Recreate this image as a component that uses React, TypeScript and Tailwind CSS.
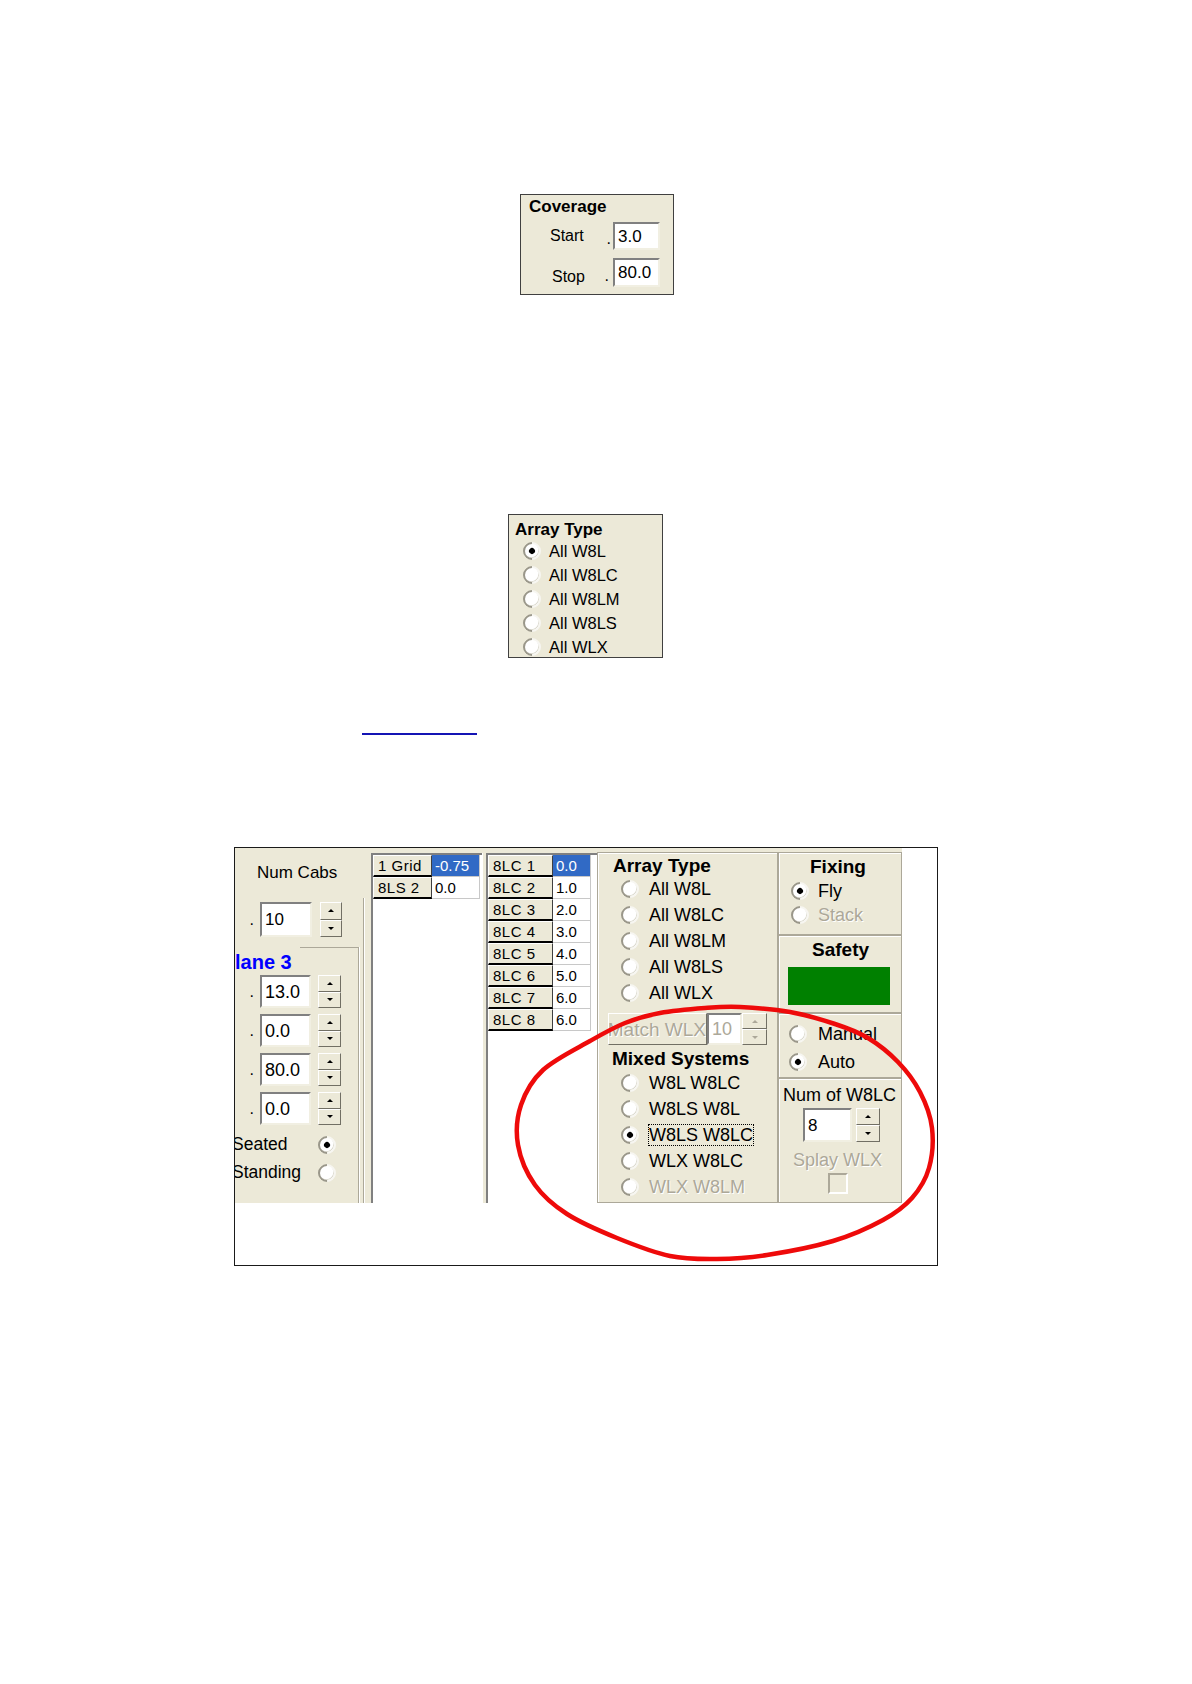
import React from "react";

type Pt = [number, number];

// hand-drawn red loop over the screenshot, page coordinates
const LOOP: Pt[] = [
  [740, 1007], [790, 1012], [835, 1024], [868, 1038], [898, 1062], [920, 1092],
  [932, 1128], [929, 1168], [912, 1198], [883, 1220], [833, 1241], [767, 1255],
  [717, 1259], [670, 1256], [617, 1238], [567, 1214], [535, 1185], [518, 1145],
  [521, 1105], [543, 1070], [590, 1041], [625, 1023], [660, 1013], [705, 1008],
];

function smoothClosed(pts: Pt[]) {
  const n = pts.length;
  let d = `M${pts[0][0]},${pts[0][1]}`;
  for (let i = 0; i < n; i++) {
    const p0 = pts[(i - 1 + n) % n];
    const p1 = pts[i];
    const p2 = pts[(i + 1) % n];
    const p3 = pts[(i + 2) % n];
    const c1x = p1[0] + (p2[0] - p0[0]) / 6;
    const c1y = p1[1] + (p2[1] - p0[1]) / 6;
    const c2x = p2[0] - (p3[0] - p1[0]) / 6;
    const c2y = p2[1] - (p3[1] - p1[1]) / 6;
    d += ` C${c1x.toFixed(1)},${c1y.toFixed(1)} ${c2x.toFixed(1)},${c2y.toFixed(1)} ${p2[0]},${p2[1]}`;
  }
  return d + " Z";
}

function Radio({ checked, className = "" }: { checked?: boolean; className?: string }) {
  return (
    <span
      className={`flex h-[18px] w-[18px] shrink-0 -rotate-45 items-center justify-center rounded-full border-2 border-t-[#9a978a] border-l-[#9a978a] border-r-[#f7f6f1] border-b-[#f7f6f1] bg-white shadow-[inset_0_-1px_0_#d9d7cc] ${className}`}
    >
      {checked && <span className="h-[6px] w-[6px] rounded-full bg-black" />}
    </span>
  );
}

function Edit({
  value,
  className = "",
  disabled,
  size = "text-[17px]",
}: {
  value: string;
  className?: string;
  disabled?: boolean;
  size?: string;
}) {
  return (
    <div
      className={`flex items-center border-2 border-t-[#808080] border-l-[#808080] border-r-[#f1efe2] border-b-[#f1efe2] bg-white pl-[3px] leading-none ${size} ${
        disabled ? "text-[#aca899]" : "text-black"
      } ${className}`}
    >
      {value}
    </div>
  );
}

function Spinner({ className = "", disabled }: { className?: string; disabled?: boolean }) {
  const btn =
    "flex flex-1 items-center justify-center border border-t-white border-l-white border-r-[#716f64] border-b-[#716f64] bg-[#ece9d8]";
  return (
    <div className={`flex flex-col ${className}`}>
      <div className={btn}>
        <span
          className={`h-0 w-0 border-x-[3px] border-b-[3px] border-x-transparent ${
            disabled ? "border-b-[#aca899]" : "border-b-black"
          }`}
        />
      </div>
      <div className={btn}>
        <span
          className={`h-0 w-0 border-x-[3px] border-t-[3px] border-x-transparent ${
            disabled ? "border-t-[#aca899]" : "border-t-black"
          }`}
        />
      </div>
    </div>
  );
}

function Dot({ className = "" }: { className?: string }) {
  return (
    <div className={`flex items-end justify-end text-[16px] leading-none ${className}`}>.</div>
  );
}

function SpinRow({ value, first }: { value: string; first?: boolean }) {
  return (
    <div className={`flex h-[33px] ${first ? "mt-[3px]" : "mt-[6px]"}`}>
      <Dot className="w-[25px] pb-[8px] pr-[6px]" />
      <Edit value={value} className="w-[51px]" size="text-[18px]" />
      <Spinner className="ml-[7px] w-[23px]" />
    </div>
  );
}

function GridRow({
  label,
  value,
  btnW,
  valW,
  selected,
}: {
  label: string;
  value: string;
  btnW: string;
  valW: string;
  selected?: boolean;
}) {
  return (
    <div className="flex h-[22px] text-[15px] leading-none">
      <div
        className={`flex items-center border border-t-white border-l-white border-r-[#404040] border-b-2 border-b-black bg-[#ece9d8] pl-[4px] tracking-[0.5px] ${btnW}`}
      >
        {label}
      </div>
      <div
        className={`flex items-center border-b border-r border-b-[#c8c8c8] border-r-[#c8c8c8] pl-[3px] ${valW} ${
          selected ? "bg-[#316ac5] text-white" : "bg-white text-black"
        }`}
      >
        {value}
      </div>
    </div>
  );
}

function RadioRow({
  label,
  checked,
  disabled,
  focus,
}: {
  label: string;
  checked?: boolean;
  disabled?: boolean;
  focus?: boolean;
}) {
  return (
    <div className="flex h-[26px] items-center pl-[23px]">
      <Radio checked={checked} />
      <span
        className={`ml-[10px] text-[18px] leading-[20px] ${
          disabled ? "text-[#aca899] [text-shadow:1px_1px_0_#fff]" : "text-black"
        } ${focus ? "outline-1 outline-dotted outline-black" : ""}`}
      >
        {label}
      </span>
    </div>
  );
}

const etched = "border border-[#aca899] shadow-[inset_1px_1px_0_#fff]";

export default function App() {
  const grid2 = ["0.0", "1.0", "2.0", "3.0", "4.0", "5.0", "6.0", "6.0"];

  return (
    <div className="relative h-[1684px] w-[1192px] overflow-hidden bg-white font-['Liberation_Sans',Arial,sans-serif] text-black">
      <div className="flex flex-col">
        {/* Coverage */}
        <div className="ml-[520px] mt-[194px] h-[101px] w-[154px] border border-[#404040] bg-[#ece9d8]">
          <div className="pl-[8px] pt-[1px] text-[17px] font-bold leading-[22px]">Coverage</div>
          <div className="mt-[4px] flex h-[28px] items-center">
            <span className="w-[86px] pl-[29px] text-[16px] leading-none">Start</span>
            <Dot className="h-full w-[6px] pb-[3px] pr-[2px]" />
            <Edit value="3.0" className="h-full w-[47px]" />
          </div>
          <div className="mt-[8px] flex h-[29px] items-center">
            <span className="w-[86px] pl-[31px] pt-[8px] text-[16px] leading-none">Stop</span>
            <Dot className="h-full w-[6px] pb-[3px] pr-[4px]" />
            <Edit value="80.0" className="h-full w-[47px]" />
          </div>
        </div>

        {/* Array Type */}
        <div className="ml-[508px] mt-[219px] h-[144px] w-[155px] border border-[#404040] bg-[#ece9d8]">
          <div className="pl-[6px] pt-[5px] text-[17px] font-bold leading-[20px]">Array Type</div>
          <div className="-mt-[1px]">
            {["All W8L", "All W8LC", "All W8LM", "All W8LS", "All WLX"].map((t, i) => (
              <div key={t} className="flex h-[24px] items-center pl-[14px]">
                <Radio checked={i === 0} className="h-[17px] w-[17px]" />
                <span className="ml-[8px] text-[16.5px] leading-none">{t}</span>
              </div>
            ))}
          </div>
        </div>

        {/* link underline */}
        <div className="ml-[362px] mt-[75px] h-[2px] w-[115px] bg-[#1414b4]" />

        {/* screenshot frame */}
        <div className="ml-[234px] mt-[112px] h-[419px] w-[704px] overflow-hidden border border-[#1a1a1a] bg-white">
          <div className="flex h-[355px] w-[667px] bg-[#ece9d8]">
            {/* left column */}
            <div className="flex w-[136px] flex-col">
              <div className="h-[50px] pl-[22px] pt-[14px] text-[17px] leading-[22px]">Num Cabs</div>
              <div className="flex w-[129px] flex-1 flex-col border-r border-r-[#aca899] shadow-[1px_0_0_#fff]">
                <div className="mt-[4px] flex h-[35px]">
                  <Dot className="w-[25px] pb-[9px] pr-[6px]" />
                  <Edit value="10" className="w-[52px]" />
                  <Spinner className="ml-[8px] w-[22px]" />
                </div>
                <div className="mt-[10px] flex w-[124px] flex-1 flex-col border-r border-r-[#aca899] shadow-[1px_0_0_#fff]">
                  <div className="ml-[65px] border-t border-t-[#aca899]" />
                  <div className="mt-[4px] text-[20px] font-bold leading-[20px] text-[#0000ff]">lane 3</div>
                  <SpinRow value="13.0" first />
                  <SpinRow value="0.0" />
                  <SpinRow value="80.0" />
                  <SpinRow value="0.0" />
                  <div className="mt-[8px] flex h-[24px] items-center">
                    <span className="ml-[-3px] w-[86px] text-[17.5px] leading-none">Seated</span>
                    <Radio checked />
                  </div>
                  <div className="mt-[4px] flex h-[24px] items-center">
                    <span className="ml-[-3px] w-[86px] text-[17.5px] leading-none">Standing</span>
                    <Radio />
                  </div>
                </div>
              </div>
            </div>

            {/* grids */}
            <div className="mt-[5px] flex h-[350px] w-[226px]">
              <div className="w-[111px] border-l-2 border-t-2 border-l-[#808080] border-t-[#808080] bg-white">
                <GridRow label="1 Grid" value="-0.75" btnW="w-[59px]" valW="w-[48px]" selected />
                <GridRow label="8LS 2" value="0.0" btnW="w-[59px]" valW="w-[48px]" />
              </div>
              <div className="w-[4px] border-l border-l-white" />
              <div className="w-[111px] border-l-2 border-t-2 border-l-[#808080] border-t-[#808080] bg-white">
                {grid2.map((v, i) => (
                  <GridRow
                    key={i}
                    label={`8LC ${i + 1}`}
                    value={v}
                    btnW="w-[65px]"
                    valW="w-[38px]"
                    selected={i === 0}
                  />
                ))}
              </div>
            </div>

            {/* array type / mixed systems */}
            <div className={`mt-[4px] flex h-[351px] w-[181px] flex-col ${etched}`}>
              <div className="mt-[3px] pl-[15px] text-[19px] font-bold leading-[20px]">Array Type</div>
              <RadioRow label="All W8L" />
              <RadioRow label="All W8LC" />
              <RadioRow label="All W8LM" />
              <RadioRow label="All W8LS" />
              <RadioRow label="All WLX" />
              <div className="mt-[7px] flex h-[32px] pl-[10px]">
                <div className="flex w-[99px] items-center justify-end overflow-hidden border border-t-white border-l-white border-r-[#716f64] border-b-[#716f64] bg-[#ece9d8]">
                  <span className="whitespace-nowrap text-[19px] leading-none text-[#aca899] [text-shadow:1px_1px_0_#fff]">
                    Match WLX
                  </span>
                </div>
                <Edit value="10" className="w-[35px]" disabled size="text-[18px]" />
                <Spinner className="w-[25px]" disabled />
              </div>
              <div className="mt-[4px] pl-[14px] text-[19px] font-bold leading-[20px]">Mixed Systems</div>
              <div className="mt-[1px]">
                <RadioRow label="W8L W8LC" />
                <RadioRow label="W8LS W8L" />
                <RadioRow label="W8LS W8LC" checked focus />
                <RadioRow label="WLX W8LC" />
                <RadioRow label="WLX W8LM" disabled />
              </div>
            </div>

            {/* fixing column */}
            <div className="mt-[4px] flex w-[124px] flex-col">
              <div className={`h-[83px] ${etched}`}>
                <div className="mt-[4px] pl-[31px] text-[19px] font-bold leading-[20px]">Fixing</div>
                <div className="mt-[2px] flex h-[24px] items-center pl-[12px]">
                  <Radio checked />
                  <span className="ml-[9px] text-[18px] leading-none">Fly</span>
                </div>
                <div className="flex h-[24px] items-center pl-[12px]">
                  <Radio />
                  <span className="ml-[9px] text-[18px] leading-none text-[#aca899] [text-shadow:1px_1px_0_#fff]">
                    Stack
                  </span>
                </div>
              </div>
              <div className={`h-[78px] ${etched}`}>
                <div className="mt-[4px] pl-[33px] text-[19px] font-bold leading-[20px]">Safety</div>
                <div className="ml-[9px] mt-[7px] h-[38px] w-[102px] bg-[#008000]" />
              </div>
              <div className={`h-[65px] ${etched}`}>
                <div className="mt-[6px] flex h-[28px] items-center pl-[10px]">
                  <Radio />
                  <span className="ml-[11px] text-[18px] leading-none">Manual</span>
                </div>
                <div className="flex h-[28px] items-center pl-[10px]">
                  <Radio checked />
                  <span className="ml-[11px] text-[18px] leading-none">Auto</span>
                </div>
              </div>
              <div className={`h-[125px] ${etched}`}>
                <div className="mt-[6px] pl-[4px] text-[18px] leading-[20px]">Num of W8LC</div>
                <div className="mt-[3px] flex h-[34px] pl-[24px]">
                  <Edit value="8" className="w-[49px]" />
                  <Spinner className="ml-[4px] w-[24px]" />
                </div>
                <div className="mt-[8px] pl-[14px] text-[18px] leading-[20px] text-[#aca899] [text-shadow:1px_1px_0_#fff]">
                  Splay WLX
                </div>
                <div className="ml-[49px] mt-[3px] h-[21px] w-[20px] border-2 border-t-[#aca899] border-l-[#aca899] border-r-white border-b-white bg-[#ece9d8]" />
              </div>
            </div>
          </div>
        </div>
      </div>

      <svg
        className="pointer-events-none absolute left-0 top-0"
        width={1192}
        height={1684}
        viewBox="0 0 1192 1684"
      >
        <path
          d={smoothClosed(LOOP)}
          fill="none"
          stroke="#ee0a0a"
          strokeWidth={4.5}
          strokeLinejoin="round"
        />
      </svg>
    </div>
  );
}
